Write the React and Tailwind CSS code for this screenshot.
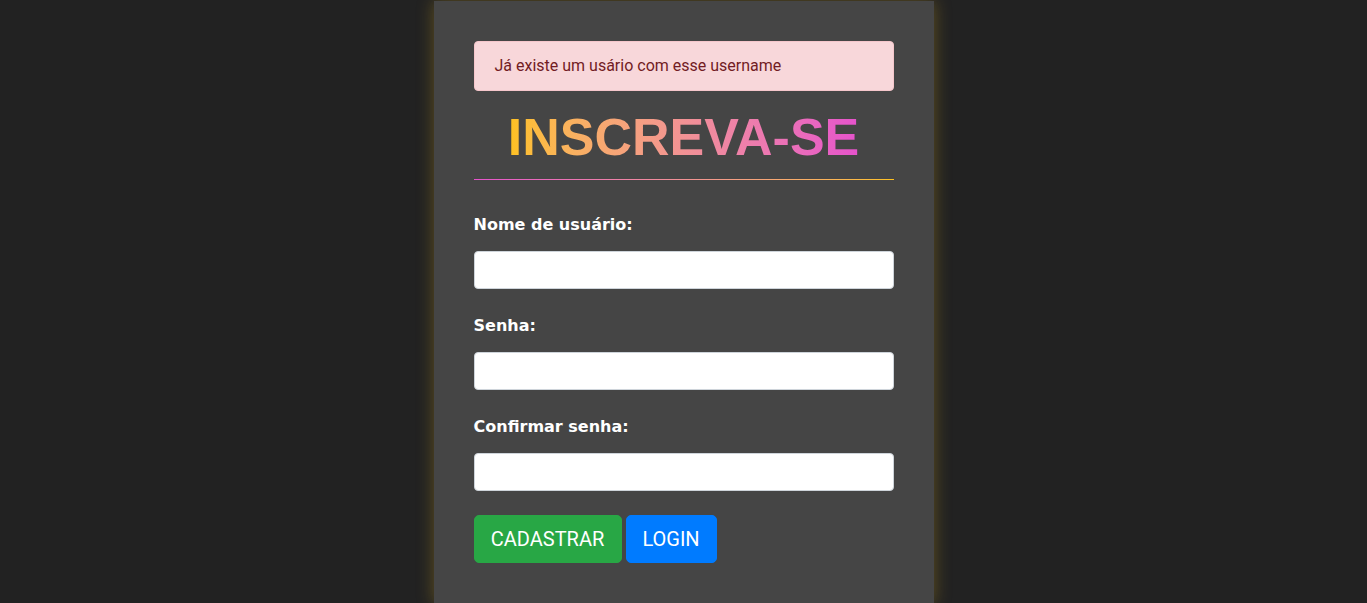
export default function App() {
  return (
    <div className="min-h-screen bg-[#222222] flex justify-center">
      <div className="w-[500px] min-h-[603px] mt-px bg-[#454545] px-10 pt-10 pb-10 shadow-[0_0_16px_rgba(214,170,30,0.35)]">
        {/* Alert */}
        <div className="rounded border border-[#f5c6cb] bg-[#f8d7da] px-5 py-3 text-[#721c24] text-base leading-6 font-['Roboto',sans-serif]">
          Já existe um usário com esse username
        </div>

        {/* Title */}
        <h1 className="mt-[15px] text-center text-[52px] leading-[62px] font-bold font-['Liberation_Sans',Arial,sans-serif]">
          <span className="bg-gradient-to-r from-[#fec11b] to-[#e652cc] bg-clip-text text-transparent">INSCREVA-SE</span>
        </h1>
        <div className="mt-[11px] h-px bg-gradient-to-r from-[#e652cc] to-[#fec11b]" />

        {/* Form */}
        <form className="font-['DejaVu_Sans',sans-serif]">
          <div className="mt-[33px]">
            <label className="block text-base leading-6 font-bold text-white">Nome de usuário:</label>
            <input type="text" className="mt-[14px] block w-full h-[38px] rounded border border-[#ced4da] bg-white" />
          </div>
          <div className="mt-[25px]">
            <label className="block text-base leading-6 font-bold text-white">Senha:</label>
            <input type="password" className="mt-[14px] block w-full h-[38px] rounded border border-[#ced4da] bg-white" />
          </div>
          <div className="mt-[25px]">
            <label className="block text-base leading-6 font-bold text-white">Confirmar senha:</label>
            <input type="password" className="mt-[14px] block w-full h-[38px] rounded border border-[#ced4da] bg-white" />
          </div>

          <div className="mt-[24px] flex gap-1 font-['Roboto',sans-serif]">
            <button type="button" className="h-12 w-[148px] rounded-[5px] border border-[#28a745] bg-[#28a745] text-xl text-white">
              CADASTRAR
            </button>
            <button type="button" className="h-12 w-[91px] rounded-[5px] border border-[#007bff] bg-[#007bff] text-xl text-white">
              LOGIN
            </button>
          </div>
        </form>
      </div>
    </div>
  );
}
